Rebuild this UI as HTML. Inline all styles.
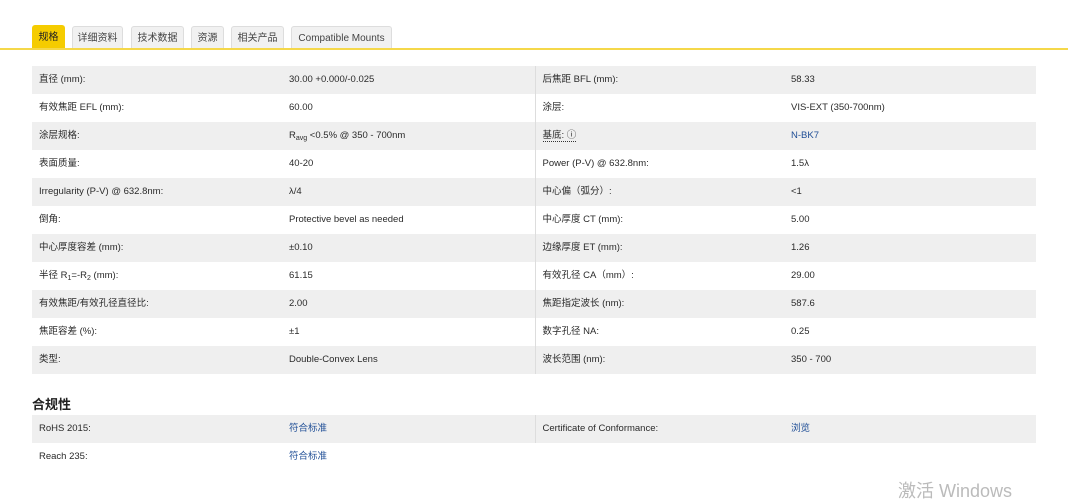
<!DOCTYPE html><html><head><meta charset="utf-8"><style>
body{margin:0;width:1068px;height:488px;background:#fff;font-family:"Liberation Sans","Noto Sans CJK SC",sans-serif;font-size:9.5px;color:#2a2a2a;position:relative;overflow:hidden}
.tab{position:absolute;top:26px;height:23px;line-height:24px;background:#f1f1f1;border:1px solid #ddd;border-bottom:none;border-radius:3px 3px 0 0;box-sizing:border-box;text-align:center;color:#444;font-size:10px}
.tab.a{background:#f5cc00;border-color:#f5cc00;color:#222;top:25px;height:24px}
.line{position:absolute;top:48px;left:0;width:1068px;height:2px;background:#f5d84a}
table{position:absolute;left:32px;width:1004px;border-collapse:collapse;table-layout:fixed}
td{height:28px;padding:0 0 0 7px;white-space:nowrap;line-height:12px;box-sizing:border-box}
sub{font-size:7px;line-height:0;vertical-align:-2px}
tr:nth-child(odd) td{background:#efefef}
td.d{border-left:1px solid #ddd}
.c1{width:250px}.c2{width:253px}.c3{width:249px}
a{color:#1f4e96;text-decoration:none}
h3{position:absolute;left:32px;top:394px;margin:0;font-size:13px;font-weight:bold;color:#222}
.w{position:absolute;left:898px;top:477px;font-size:18px;color:#bbb}
</style></head><body>
<div class="tab a" style="left:32px;width:33px">规格</div>
<div class="tab" style="left:72px;width:51px">详细资料</div>
<div class="tab" style="left:131px;width:53px">技术数据</div>
<div class="tab" style="left:191px;width:33px">资源</div>
<div class="tab" style="left:231px;width:53px">相关产品</div>
<div class="tab" style="left:291px;width:101px">Compatible Mounts</div>
<div class="line"></div>
<table style="top:66px">
<tr><td class="c1">直径 (mm):</td><td class="c2">30.00 +0.000/-0.025</td><td class="d c3">后焦距 BFL (mm):</td><td>58.33</td></tr>
<tr><td>有效焦距 EFL (mm):</td><td>60.00</td><td class="d">涂层:</td><td>VIS-EXT (350-700nm)</td></tr>
<tr><td>涂层规格:</td><td>R<sub>avg</sub> &lt;0.5% @ 350 - 700nm</td><td class="d"><span style="border-bottom:1px dotted #333">基底: ⓘ</span></td><td><a>N-BK7</a></td></tr>
<tr><td>表面质量:</td><td>40-20</td><td class="d">Power (P-V) @ 632.8nm:</td><td>1.5λ</td></tr>
<tr><td>Irregularity (P-V) @ 632.8nm:</td><td>λ/4</td><td class="d">中心偏（弧分）:</td><td>&lt;1</td></tr>
<tr><td>倒角:</td><td>Protective bevel as needed</td><td class="d">中心厚度 CT (mm):</td><td>5.00</td></tr>
<tr><td>中心厚度容差 (mm):</td><td>±0.10</td><td class="d">边缘厚度 ET (mm):</td><td>1.26</td></tr>
<tr><td>半径 R<sub>1</sub>=-R<sub>2</sub> (mm):</td><td>61.15</td><td class="d">有效孔径 CA（mm）:</td><td>29.00</td></tr>
<tr><td>有效焦距/有效孔径直径比:</td><td>2.00</td><td class="d">焦距指定波长 (nm):</td><td>587.6</td></tr>
<tr><td>焦距容差 (%):</td><td>±1</td><td class="d">数字孔径 NA:</td><td>0.25</td></tr>
<tr><td>类型:</td><td>Double-Convex Lens</td><td class="d">波长范围 (nm):</td><td>350 - 700</td></tr>
</table>
<h3>合规性</h3>
<table style="top:415px">
<tr><td class="c1">RoHS 2015:</td><td class="c2"><a>符合标准</a></td><td class="d c3">Certificate of Conformance:</td><td><a>浏览</a></td></tr>
<tr><td>Reach 235:</td><td><a>符合标准</a></td><td style="border:none"></td><td></td></tr>
</table>
<div class="w">激活 Windows</div>
</body></html>
